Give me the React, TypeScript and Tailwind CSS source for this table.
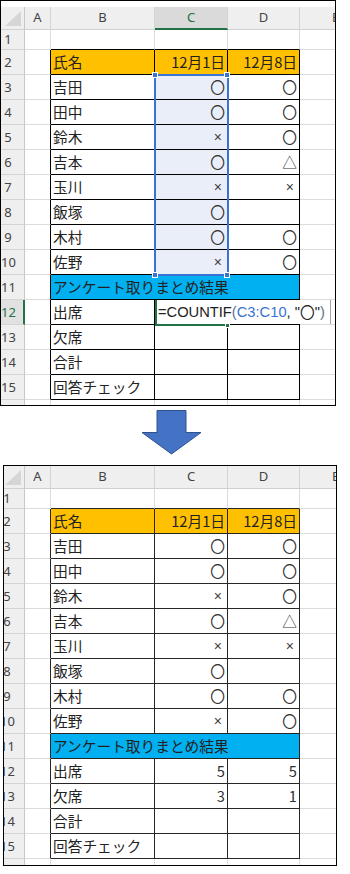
import React from 'react';

type Row = {
  n: number;
  kind: 'blank' | 'head' | 'entry' | 'band' | 'sum';
  b?: string;
  c?: string;
  d?: string;
};

const names = ['吉田', '田中', '鈴木', '吉本', '玉川', '飯塚', '木村', '佐野'];
const dec1 = ['〇', '〇', '×', '〇', '×', '〇', '〇', '×'];
const dec8 = ['〇', '〇', '〇', '△', '×', '', '〇', '〇'];
const sums = ['出席', '欠席', '合計', '回答チェック'];

function buildRows(done: boolean): Row[] {
  const rows: Row[] = [{ n: 1, kind: 'blank' }];
  rows.push({ n: 2, kind: 'head', b: '氏名', c: '12月1日', d: '12月8日' });
  names.forEach((b, i) => rows.push({ n: 3 + i, kind: 'entry', b, c: dec1[i], d: dec8[i] }));
  rows.push({ n: 11, kind: 'band', b: 'アンケート取りまとめ結果' });
  const counts = [
    ['5', '5'],
    ['3', '1'],
  ];
  sums.forEach((b, i) =>
    rows.push({
      n: 12 + i,
      kind: 'sum',
      b,
      c: done && counts[i] ? counts[i][0] : '',
      d: done && counts[i] ? counts[i][1] : '',
    }),
  );
  rows.push({ n: 16, kind: 'blank' });
  return rows;
}

function Mark({ v }: { v?: string }) {
  if (!v) return null;
  if (v === '×') {
    return <span className="font-['Liberation_Sans',sans-serif] text-[14px] text-[#3d3d3d] mr-[3px]">×</span>;
  }
  return <span className="text-[#333]">{v}</span>;
}

function CornerTriangle() {
  return (
    <svg width="18" height="16" viewBox="0 0 18 16" className="shrink-0">
      <path d="M17 0 L17 15 L1 15 Z" fill="#d6d6d6" />
    </svg>
  );
}

function Sheet({ done }: { done: boolean }) {
  const rows = buildRows(done);
  const cols = done
    ? 'grid grid-cols-[21px_26px_104px_73px_72px_72px]'
    : 'grid grid-cols-[24px_26px_104px_73px_72px_72px]';
  const rTable = done ? 'border-r-[#262626]' : 'border-r-black';
  const bTable = done ? 'border-b-[#262626]' : 'border-b-black';
  const rGrid = 'border-r-[#dcdcdc]';
  const bGrid = 'border-b-[#dcdcdc]';
  const numBox = done ? 'w-[14px] -ml-[4px] shrink-0 text-center' : 'w-[14px] shrink-0 text-center';
  const selC = done ? '' : 'bg-[#e9eef8]';

  return (
    <div className="relative">
      {/* column letters */}
      <div className={`${cols} h-[23px] text-[13px] text-[#444] font-['Noto_Sans',sans-serif]`}>
        <div className="flex items-end justify-end bg-[#efefef] border-r border-b border-r-[#c8c8c8] border-b-[#d0d0d0] pb-[2px] pr-[2px]">
          <CornerTriangle />
        </div>
        <div className="flex items-center justify-center bg-[#efefef] border-r border-b border-r-[#d4d4d4] border-b-[#d0d0d0]">A</div>
        <div className="flex items-center justify-center bg-[#efefef] border-r border-b border-r-[#d4d4d4] border-b-[#d0d0d0]">B</div>
        {done ? (
          <div className="flex items-center justify-center bg-[#efefef] border-r border-b border-r-[#d4d4d4] border-b-[#d0d0d0]">C</div>
        ) : (
          <div className="flex items-center justify-center bg-[#dadada] text-[#217346] border-r border-b-2 border-r-[#d4d4d4] border-b-[#217346]">C</div>
        )}
        <div className="flex items-center justify-center bg-[#efefef] border-r border-b border-r-[#d4d4d4] border-b-[#d0d0d0]">D</div>
        <div className="flex items-center justify-center bg-[#efefef] border-r border-b border-r-[#d4d4d4] border-b-[#d0d0d0]">E</div>
      </div>

      {rows.map((row) => {
        const inTable = row.n >= 2 && row.n <= 15;
        const h = row.n === 1 ? 'h-[20px]' : 'h-[25px]';
        const active = !done && row.n === 12;
        const rowHead = active
          ? 'bg-[#e1e1e1] text-[#217346] border-r-2 border-r-[#217346]'
          : 'bg-[#efefef] text-[#444] border-r border-r-[#c8c8c8]';
        const aRight = inTable ? rTable : rGrid;
        const right = inTable ? rTable : rGrid;
        const bottom = inTable ? bTable : row.n === 1 ? bTable : bGrid;
        const fill = row.kind === 'head' ? 'bg-[#ffc000]' : '';
        const cFill = row.kind === 'entry' ? selC : fill;

        return (
          <div key={row.n} className={`${cols} ${h} text-[14.7px] leading-none text-[#222]`}>
            <div className={`flex items-center overflow-hidden border-b border-b-[#d4d4d4] text-[13px] font-['Noto_Sans',sans-serif] ${rowHead}`}>
              <span className={numBox}>{row.n}</span>
            </div>
            <div className={`border-r border-b ${aRight} ${bGrid}`} />
            {row.kind === 'band' ? (
              <div className={`col-span-3 flex items-center pl-[2px] whitespace-nowrap bg-[#00b0f0] border-r border-b ${rTable} ${bTable}`}>
                {row.b}
              </div>
            ) : (
              <>
                <div className={`flex items-center pl-[2px] whitespace-nowrap border-r border-b ${right} ${bottom} ${fill}`}>
                  {row.b}
                </div>
                <div className={`flex items-center justify-end pr-[2px] whitespace-nowrap border-r border-b ${right} ${bottom} ${cFill}`}>
                  {row.kind === 'head' ? row.c : <Mark v={row.c} />}
                </div>
                <div className={`flex items-center justify-end pr-[2px] whitespace-nowrap border-r border-b ${right} ${bottom} ${fill}`}>
                  {row.kind === 'head' ? row.d : <Mark v={row.d} />}
                </div>
              </>
            )}
            <div className={`border-r border-b ${rGrid} ${bGrid}`} />
          </div>
        );
      })}

      {!done && (
        <>
          {/* referenced range C3:C10 */}
          <div className="absolute left-[153px] top-[67px] w-[75px] h-[202px] border-2 border-[#3a73d2]" />
          <div className="absolute left-[151px] top-[65px] w-[6px] h-[6px] bg-[#3a73d2] border border-white" />
          <div className="absolute left-[223px] top-[65px] w-[6px] h-[6px] bg-[#3a73d2] border border-white" />
          <div className="absolute left-[151px] top-[265px] w-[6px] h-[6px] bg-[#3a73d2] border border-white" />
          <div className="absolute left-[223px] top-[265px] w-[6px] h-[6px] bg-[#3a73d2] border border-white" />

          {/* cell C12 being edited */}
          <div className="absolute left-[154px] top-[293px] w-[176px] h-[24px] flex items-center pl-[1px] bg-white border-l-2 border-l-[#217346] border-r border-r-[#a6a6a6] whitespace-nowrap text-[14.7px] font-['Liberation_Sans','Noto_Sans_CJK_JP',sans-serif] text-[#222]">
            <span>=COUNTIF</span>
            <span className="text-[#5f6f8f]">(</span>
            <span className="text-[#3a73d2]">C3:C10</span>
            <span>, "</span>
            <span className="font-['Noto_Sans_CJK_JP',sans-serif]">〇</span>
            <span>"</span>
            <span className="text-[#5f6f8f]">)</span>
          </div>
          <div className="absolute left-[154px] top-[317px] w-[73px] h-[2px] bg-[#217346]" />
          <div className="absolute left-[224px] top-[316px] w-[5px] h-[5px] bg-[#217346] border border-white" />
        </>
      )}
    </div>
  );
}

function DownArrow() {
  return (
    <svg width="61" height="45" viewBox="0 0 61 45" className="ml-[141px] mt-[4px]">
      <path
        d="M16 0.5 L45 0.5 L45 22.5 L60 22.5 L30.5 44 L1 22.5 L16 22.5 Z"
        fill="#4472c4"
        stroke="#2f528f"
        strokeWidth="1"
      />
    </svg>
  );
}

export default function App() {
  return (
    <div className="w-[350px] h-[874px] bg-white overflow-hidden font-['Noto_Sans_CJK_JP',sans-serif]">
      <div className="w-[336px] h-[406px] border border-black overflow-hidden">
        <div className="h-[6px]" />
        <Sheet done={false} />
      </div>
      <div className="h-[55px]">
        <DownArrow />
      </div>
      <div className="ml-[3px] w-[334px] h-[401px] border border-black overflow-hidden">
        <Sheet done />
      </div>
    </div>
  );
}
